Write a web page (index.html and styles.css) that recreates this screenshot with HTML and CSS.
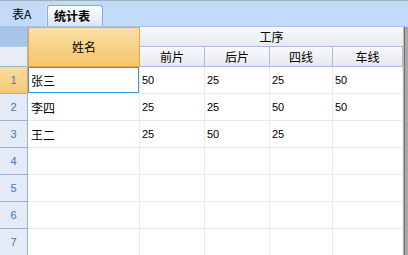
FILE: index.html
```html
<!DOCTYPE html>
<html>
<head>
<meta charset="utf-8">
<link rel="stylesheet" href="styles.css">
</head>
<body>
<div class="tabs">
  <div class="tab">表A</div>
  <div class="tab active">统计表</div>
</div>
<div class="sheet">
  <div class="corner-top"></div>
  <div class="name-head">姓名</div>
  <div class="group-head">工序</div>
  <div class="scroll"></div>
  <div class="corner-bottom"></div>
  <div class="col-head">前片</div>
  <div class="col-head">后片</div>
  <div class="col-head">四线</div>
  <div class="col-head">车线</div>

  <div class="rh sel">1</div><div class="cell name current">张三</div><div class="cell num">50</div><div class="cell num">25</div><div class="cell num">25</div><div class="cell num">50</div>
  <div class="rh">2</div><div class="cell name">李四</div><div class="cell num">25</div><div class="cell num">25</div><div class="cell num">50</div><div class="cell num">50</div>
  <div class="rh">3</div><div class="cell name">王二</div><div class="cell num">25</div><div class="cell num">50</div><div class="cell num">25</div><div class="cell num"></div>
  <div class="rh">4</div><div class="cell"></div><div class="cell"></div><div class="cell"></div><div class="cell"></div><div class="cell"></div>
  <div class="rh">5</div><div class="cell"></div><div class="cell"></div><div class="cell"></div><div class="cell"></div><div class="cell"></div>
  <div class="rh">6</div><div class="cell"></div><div class="cell"></div><div class="cell"></div><div class="cell"></div><div class="cell"></div>
  <div class="rh">7</div><div class="cell"></div><div class="cell"></div><div class="cell"></div><div class="cell"></div><div class="cell"></div>
</div>
</body>
</html>
```

FILE: styles.css
```css
* { box-sizing: border-box; }
html, body { margin: 0; padding: 0; overflow: hidden; }
body {
  width: 408px;
  height: 255px;
  background: #ffffff;
  font-family: "Noto Sans CJK SC", "Liberation Sans", sans-serif;
  font-size: 12px;
  color: #000;
}

.tabs {
  height: 27px;
  background: #c2dbf9;
  border-top: 1px solid #a3adbb;
  border-bottom: 1px solid #a6c5ee;
  display: flex;
  align-items: flex-end;
  padding-left: 3px;
}
.tab {
  height: 22px;
  line-height: 20px;
  padding: 0 9px;
  width: 44px;
  border-right: 1px solid #d6e7fc;
  text-align: left;
}
.tab.active {
  width: 56px;
  margin-left: 0;
  border: 1px solid #86aadd;
  border-bottom: none;
  border-radius: 3px 3px 0 0;
  background: linear-gradient(#ffffff, #dae4f3);
  font-weight: bold;
  padding: 0 0 0 6px;
  height: 21px;
}

.sheet {
  display: grid;
  grid-template-columns: 28px 112px 65px 65px 63px 70px 5px;
  grid-template-rows: 20px 20px repeat(7, 27px);
}

.corner-top {
  background: #a9c4e9;
  border-right: 1px solid #9ab3d3;
  border-bottom: 1px solid #b8cbe4;
}
.corner-bottom {
  background: #e7ecf5;
  border-right: 1px solid #9ab3d3;
  border-bottom: 1px solid #9ab3d3;
}

.name-head {
  grid-column: 2;
  grid-row: 1 / 3;
  background: linear-gradient(#fbdfa6, #f5c56d);
  border: 1px solid #f0a446;
  display: flex;
  align-items: center;
  justify-content: center;
  padding-bottom: 2px;
}

.group-head {
  grid-column: 3 / 7;
  grid-row: 1;
  background: linear-gradient(#f9fafc, #e6e9ef);
  border-bottom: 1px solid #a5bedb;
  display: flex;
  align-items: center;
  justify-content: center;
}

.col-head {
  background: linear-gradient(#f9fafc, #e5e8ef);
  border-right: 1px solid #a5bedb;
  border-bottom: 1px solid #a5bedb;
  display: flex;
  align-items: center;
  justify-content: center;
}

.scroll {
  grid-column: 7;
  grid-row: 1 / -1;
  border-left: 1px solid #bdbdbd;
  background: linear-gradient(90deg, #6e6e6e 0 1px, #a9a9a9 1px);
}

.rh {
  background: #e4ebf6;
  border-right: 1px solid #9ab3d3;
  border-bottom: 1px solid #9ab3d3;
  color: #3f78b8;
  font-family: "Liberation Sans", sans-serif;
  font-size: 11px;
  display: flex;
  align-items: center;
  justify-content: center;
}
.rh.sel {
  background: linear-gradient(#fbdca0, #f6c977);
  border-bottom-color: #f0a446;
  border-right-color: #f0a446;
}

.cell {
  border-right: 1px solid #ebebeb;
  border-bottom: 1px solid #ebebeb;
  display: flex;
  align-items: center;
}
.cell.name {
  padding-left: 3px;
  font-size: 12px;
}
.cell.num {
  padding-left: 2px;
  font-family: "Liberation Sans", sans-serif;
  font-size: 11px;
}
.cell.current {
  box-shadow: inset 0 0 0 1px #3b97e6;
}
```
